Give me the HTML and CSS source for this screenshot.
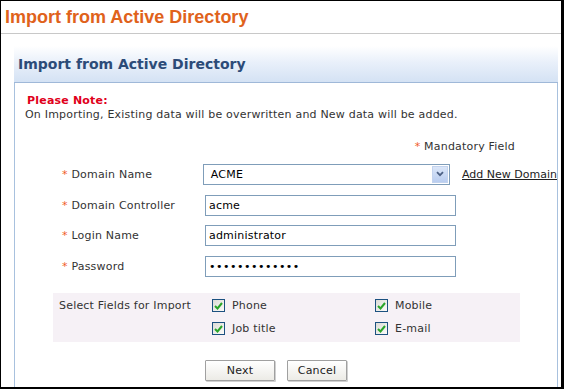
FILE: index.html
```html
<!DOCTYPE html>
<html lang="en">
<head>
  <meta charset="UTF-8" />
  <title>Import from Active Directory</title>
  <link rel="stylesheet" href="styles.css">
</head>
<body>
<div class="frame">
  <h1 class="page-title">Import from Active Directory</h1>

  <div class="panel">
    <div class="panel-head">Import from Active Directory</div>
    <div class="panel-body">
      <div class="note-title">Please Note:</div>
      <div class="note-text">On Importing, Existing data will be overwritten and New data will be added.</div>

      <div class="mandatory"><span class="star">*</span> Mandatory Field</div>

      <div class="form-rows">
        <div class="form-row">
          <label class="field-label"><span class="star">*</span> Domain Name</label>
          <div class="select-box">
            <span>ACME</span>
            <span class="select-arrow">
              <svg width="8" height="6" viewBox="0 0 8 6"><path d="M1 1.2 L4 4.2 L7 1.2" fill="none" stroke="#4d6185" stroke-width="1.8"/></svg>
            </span>
          </div>
          <a class="add-link" href="#">Add New Domain</a>
        </div>
        <div class="form-row">
          <label class="field-label"><span class="star">*</span> Domain Controller</label>
          <input class="text-input" type="text" value="acme">
        </div>
        <div class="form-row">
          <label class="field-label"><span class="star">*</span> Login Name</label>
          <input class="text-input" type="text" value="administrator">
        </div>
        <div class="form-row">
          <label class="field-label"><span class="star">*</span> Password</label>
          <input class="text-input pass" type="password" value="administrator">
        </div>
      </div>

      <div class="fields-box">
        <div class="fields-label">Select Fields for Import</div>
        <div class="fields-grid">
          <div class="check"><span class="box"><svg width="9" height="8" viewBox="0 0 9 8"><path d="M1 4 L3.5 6.5 L8 1" fill="none" stroke="#2aa52a" stroke-width="2"/></svg></span>Phone</div>
          <div class="check"><span class="box"><svg width="9" height="8" viewBox="0 0 9 8"><path d="M1 4 L3.5 6.5 L8 1" fill="none" stroke="#2aa52a" stroke-width="2"/></svg></span>Mobile</div>
          <div class="check"><span class="box"><svg width="9" height="8" viewBox="0 0 9 8"><path d="M1 4 L3.5 6.5 L8 1" fill="none" stroke="#2aa52a" stroke-width="2"/></svg></span>Job title</div>
          <div class="check"><span class="box"><svg width="9" height="8" viewBox="0 0 9 8"><path d="M1 4 L3.5 6.5 L8 1" fill="none" stroke="#2aa52a" stroke-width="2"/></svg></span>E-mail</div>
        </div>
      </div>

      <div class="buttons">
        <button class="btn btn-next">Next</button>
        <button class="btn btn-cancel">Cancel</button>
      </div>
    </div>
  </div>
</div>
</body>
</html>
```

FILE: styles.css
```css
html, body {
  margin: 0;
  background: #fff;
}

body {
  font-family: "DejaVu Sans", Verdana, sans-serif;
  font-size: 11px;
  letter-spacing: 0.2px;
  color: #333;
}

.frame {
  box-sizing: border-box;
  width: 564px;
  height: 389px;
  border-top: 1px solid #000;
  border-left: 1px solid #000;
  border-right: 3px solid #000;
  border-bottom: 2px solid #000;
  overflow: hidden;
}

.page-title {
  margin: 0;
  padding: 6px 4px 5px;
  font-family: "Liberation Sans", Arial, sans-serif;
  font-size: 18px;
  font-weight: bold;
  letter-spacing: 0;
  color: #e0621b;
  line-height: 21px;
  border-bottom: 1px solid #c8c8c8;
}

.panel {
  margin: 12px 3px 0 13px;
}

.panel-head {
  height: 36px;
  padding-left: 4px;
  line-height: 36px;
  font-size: 14px;
  font-weight: bold;
  letter-spacing: 0;
  color: #2c4b78;
  background: linear-gradient(to bottom, #ffffff 0%, #e9f0fa 45%, #d4e2f4 100%);
  border-bottom: 1px solid #9fb8d8;
}

.panel-body {
  height: 320px;
  border-left: 1px solid #a8c1de;
  border-right: 1px solid #a8c1de;
  padding: 11px 0 0 10px;
}

.note-title {
  color: #e0001b;
  font-weight: bold;
  line-height: 14px;
  padding-left: 2px;
}

.note-text {
  line-height: 14px;
}

.mandatory {
  text-align: right;
  padding-right: 42px;
  margin-top: 18px;
  line-height: 14px;
}

.star {
  color: #f05a28;
}

.form-rows {
  margin-top: 5px;
}

.form-row {
  display: flex;
  align-items: center;
  height: 30.7px;
}

.field-label {
  width: 143px;
  padding-left: 37px;
  box-sizing: content-box;
}

.select-box,
.text-input {
  box-sizing: border-box;
  width: 251px;
  height: 21px;
  border: 1px solid #7f9db9;
  background: #fff;
  font-family: "DejaVu Sans", Verdana, sans-serif;
  font-size: 11px;
  letter-spacing: 0.2px;
  color: #000;
  margin: 0;
}

.text-input {
  padding: 0 3px;
  outline: none;
}

.pass {
  letter-spacing: 0.5px;
}

.select-box {
  display: flex;
  align-items: center;
  justify-content: space-between;
  padding: 0 1px 0 7px;
}

.select-arrow {
  display: flex;
  align-items: center;
  justify-content: center;
  width: 16px;
  height: 17px;
  background: linear-gradient(to bottom, #dbe6f8, #b9cdf0);
  border: 1px solid #c3d3ee;
  box-sizing: border-box;
}

.add-link {
  margin-left: 12px;
  color: #222;
  text-decoration: underline;
  white-space: nowrap;
  letter-spacing: 0;
}

.fields-box {
  display: flex;
  align-items: flex-start;
  margin: 11px 0 0 28px;
  width: 467px;
  height: 49px;
  background: #f6f1f6;
}

.fields-label {
  width: 153px;
  padding: 6px 0 0 6px;
  line-height: 14px;
}

.fields-grid {
  display: grid;
  grid-template-columns: 163px auto;
  align-content: start;
  row-gap: 9px;
  padding-top: 6px;
}

.check {
  display: flex;
  align-items: center;
  height: 14px;
  line-height: 14px;
}

.box {
  display: inline-flex;
  align-items: center;
  justify-content: center;
  width: 13px;
  height: 13px;
  box-sizing: border-box;
  border: 1px solid #1c5180;
  background: linear-gradient(to bottom right, #dcdcd6, #fbfbf9);
  margin-right: 7px;
}

.buttons {
  display: flex;
  gap: 12px;
  margin: 18px 0 0 180px;
}

.btn {
  height: 21px;
  padding: 0;
  font-family: "DejaVu Sans", Verdana, sans-serif;
  font-size: 11px;
  letter-spacing: 0.2px;
  color: #222;
  border: 1px solid #a0a0a0;
  border-radius: 1px;
  background: linear-gradient(to bottom, #ffffff, #ecebe6);
  box-shadow: 1px 1px 0 #d0d0d0;
}

.btn-next {
  width: 70px;
}

.btn-cancel {
  width: 60px;
}
```
